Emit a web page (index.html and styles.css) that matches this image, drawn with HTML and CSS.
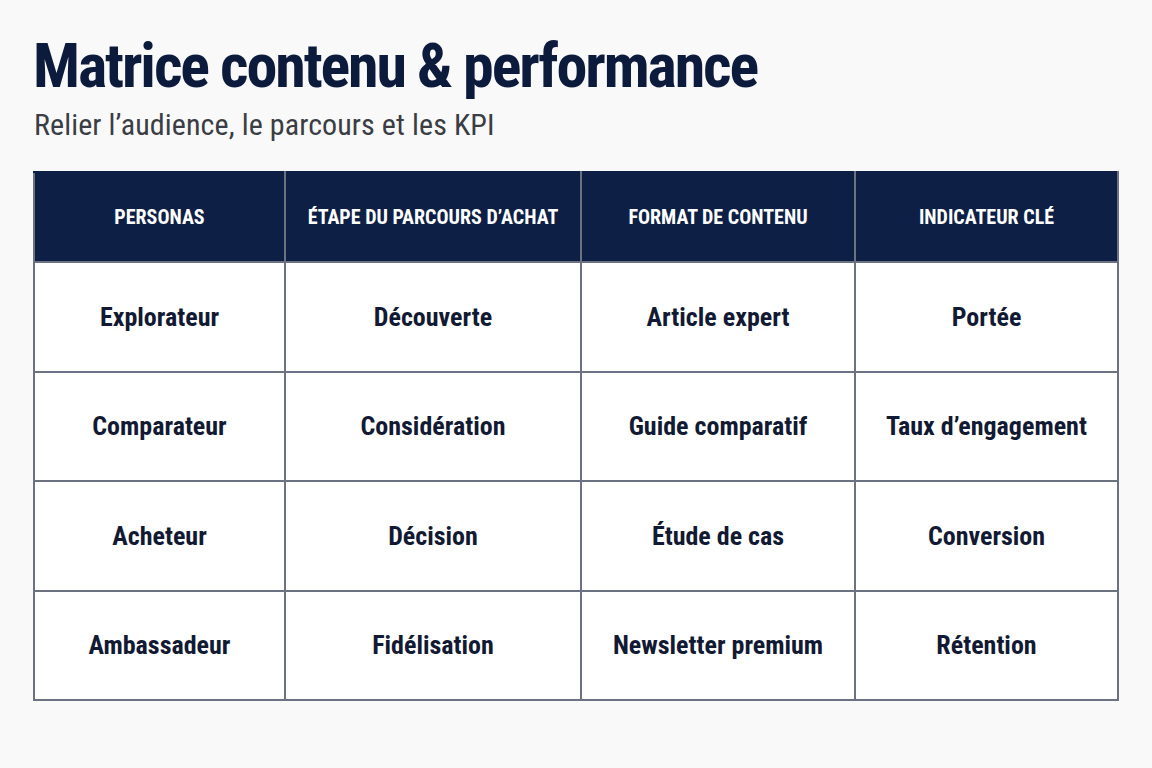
FILE: index.html
```html
<!DOCTYPE html>
<html lang="fr">
<head>
  <meta charset="UTF-8">
  <meta name="viewport" content="width=device-width, initial-scale=1.0">
  <title>Matrice contenu &amp; performance</title>
  <link rel="stylesheet" href="styles.css">
</head>
<body>

  <!-- Title -->
  <div class="page">
    <h1 class="title">Matrice contenu &amp; performance</h1>
    <p class="subtitle">Relier l’audience, le parcours et les KPI</p>

    <!-- Matrix table -->
    <table class="matrix">
      <colgroup>
        <col class="col-1">
        <col class="col-2">
        <col class="col-3">
        <col class="col-4">
      </colgroup>
      <thead>
        <tr>
          <th>Personas</th>
          <th>Étape du parcours d’achat</th>
          <th>Format de contenu</th>
          <th>Indicateur clé</th>
        </tr>
      </thead>
      <tbody>
        <tr>
          <td>Explorateur</td>
          <td>Découverte</td>
          <td>Article expert</td>
          <td>Portée</td>
        </tr>
        <tr>
          <td>Comparateur</td>
          <td>Considération</td>
          <td>Guide comparatif</td>
          <td>Taux d’engagement</td>
        </tr>
        <tr>
          <td>Acheteur</td>
          <td>Décision</td>
          <td>Étude de cas</td>
          <td>Conversion</td>
        </tr>
        <tr>
          <td>Ambassadeur</td>
          <td>Fidélisation</td>
          <td>Newsletter premium</td>
          <td>Rétention</td>
        </tr>
      </tbody>
    </table>
  </div>

</body>
</html>
```

FILE: styles.css
```css
body {
  margin: 0;
  padding: 0;
  background-color: #f9f9fa;
  font-family: "Roboto Condensed", "Open Sans Condensed", "DejaVu Sans Condensed", sans-serif;
  color: #0f1a33;
}
.page {
  padding: 30px 35px 0 33px;
}
.title {
  margin: 0;
  font-size: 62px;
  font-weight: bold;
  line-height: 72px;
  color: #0c1a3b;
  letter-spacing: -2.1px;
}
.subtitle {
  margin: 5px 0 0 1px;
  font-size: 30px;
  line-height: 36px;
  color: #3a3d44;
  letter-spacing: 0.1px;
}
.matrix {
  margin-top: 28px;
  width: 1084px;
  border-collapse: collapse;
  table-layout: fixed;
  background-color: #fff;
}
.col-1 { width: 251px; }
.col-2 { width: 296px; }
.col-3 { width: 274px; }
.col-4 { width: 263px; }
.matrix th,
.matrix td {
  border: 2px solid #6d7282;
  text-align: center;
  padding: 0;
}
.matrix th {
  height: 88px;
  background-color: #0d1f45;
  color: #fff;
  font-size: 20px;
  font-weight: bold;
  text-transform: uppercase;
  border-top-color: #0d1f45;
}
.matrix td {
  height: 107.5px;
  font-size: 26px;
  font-weight: bold;
  color: #121a33;
}
```
